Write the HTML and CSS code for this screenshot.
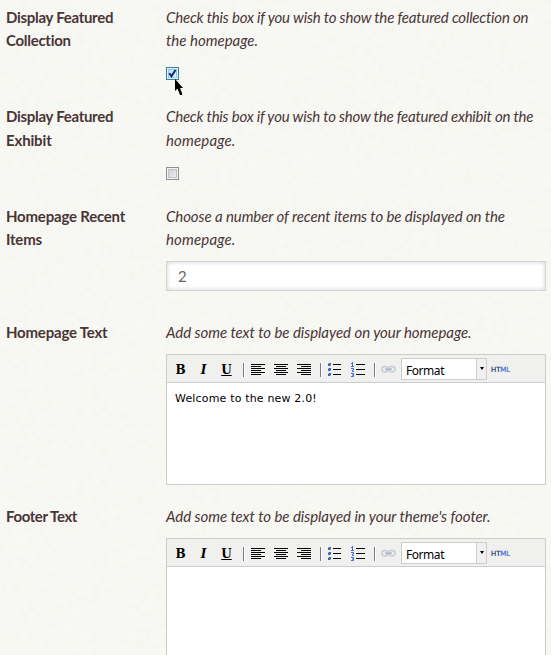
FILE: index.html
```
<!DOCTYPE html>
<html lang="en">
<head>
<meta charset="utf-8">
<title>Theme settings</title>
<link rel="stylesheet" href="styles.css">
</head>
<body>
<svg class="paper" width="551" height="655" aria-hidden="true">
  <filter id="grain" x="0" y="0" width="100%" height="100%">
    <feTurbulence type="fractalNoise" baseFrequency="0.14 0.18" numOctaves="3" seed="4"/>
    <feColorMatrix values="0 0 0 0 .86  0 0 0 0 .86  0 0 0 0 .8  .5 0 0 0 -.15"/>
  </filter>
  <rect width="551" height="655" filter="url(#grain)"/>
</svg>

<svg class="defs" width="0" height="0" aria-hidden="true">
  <symbol id="separator" viewBox="0 0 2 16"><path fill="#fff" d="M1 0h1v16H1z"/><path fill="#777b8c" d="M0 1h1v14H0z"/></symbol>
  <symbol id="left" viewBox="0 0 14 11"><path stroke="#000" d="M0 .5h14M0 2.5h10M0 4.5h14M0 6.5h10M0 8.5h14M0 10.5h10"/></symbol>
  <symbol id="center" viewBox="0 0 14 11"><path stroke="#000" d="M0 .5h14M2 2.5h10M0 4.5h14M2 6.5h10M0 8.5h14M2 10.5h10"/></symbol>
  <symbol id="right" viewBox="0 0 14 11"><path stroke="#000" d="M0 .5h14M4 2.5h10M0 4.5h14M4 6.5h10M0 8.5h14M4 10.5h10"/></symbol>
  <symbol id="bullets" viewBox="0 0 14 13"><path stroke="#000" d="M5 1.5h8M5 6.5h8M5 11.5h8"/><path fill="#3c66b4" d="M0 0h3v3H0zM0 5h3v3H0zM0 10h3v3H0z"/><path fill="#9db5df" d="M0 0h1v1H0zM0 5h1v1H0zM0 10h1v1H0zM2 2h1v1H2zM2 7h1v1H2zM2 12h1v1H2z"/></symbol>
  <symbol id="numbers" viewBox="0 0 14 15"><path stroke="#000" d="M5 2.5h9M5 7.5h9M5 12.500h9"/><path fill="none" stroke="#3f6dcb" d="M0 1.5h1.500M1.500 0v4M0 4.500h3M0 6.500h2.500v1.500h-1v1.500H3M0 11.500h2.500v3H0M1 13h2"/></symbol>
  <symbol id="link" viewBox="0 0 15 9"><g fill="none" stroke="#c3cbd7" stroke-width="1.7"><rect x="1" y="1.500" width="6" height="5.500" rx="2.500"/><rect x="8" y="1.500" width="6" height="5.500" rx="2.500"/><path stroke="#b0bbcb" d="M4 4.300h7"/></g></symbol>
</svg>

<form class="settings">
  <div class="field field-collection">
    <label class="name"><span class="n1">Display Featured</span><br><span class="n1">Collection</span></label>
    <div class="control">
      <p class="hint"><span class="h1">Check this box if you wish to show the featured collection on</span><br>the homepage.</p>
      <div class="check checked">
        <svg class="tick" width="9" height="9" viewBox="0 0 9 9"><path fill="none" stroke="#11216e" stroke-width="1.900" d="M1.300 4.300l2.200 3L7.500 1"/></svg>
        <svg class="pointer" width="11" height="18" viewBox="0 0 11 18"><path d="M1 0v12l2.500-2.500L6 16h2v-2l-2-5h3z"/></svg>
      </div>
    </div>
  </div>

  <div class="field field-exhibit">
    <label class="name"><span class="n1">Display Featured</span><br><span class="n3">Exhibit</span></label>
    <div class="control">
      <p class="hint"><span class="h3">Check this box if you wish to show the featured exhibit on the</span><br><span class="h4">homepage.</span></p>
      <div class="check"></div>
    </div>
  </div>

  <div class="field field-number">
    <label class="name" for="recent"><span class="n4">Homepage Recent</span><br><span class="n4">Items</span></label>
    <div class="control">
      <p class="hint"><span class="h5">Choose a number of recent items to be displayed on the</span><br><span class="h4">homepage.</span></p>
      <input class="number" id="recent" type="text" value="2">
    </div>
  </div>

  <div class="field field-editor">
    <label class="name"><span class="n4">Homepage Text</span></label>
    <div class="control">
      <p class="hint"><span class="h6">Add some text to be displayed on your homepage.</span></p>
      <div class="editor">
        <div class="toolbar">
          <b class="letter">B</b><b class="letter italic">I</b><b class="letter underline">U</b>
          <svg class="sep s1"><use href="#separator"/></svg>
          <svg class="align"><use href="#left"/></svg><svg class="align"><use href="#center"/></svg><svg class="align"><use href="#right"/></svg>
          <svg class="sep s2"><use href="#separator"/></svg>
          <svg class="bullets"><use href="#bullets"/></svg><svg class="numbers"><use href="#numbers"/></svg>
          <svg class="sep s3"><use href="#separator"/></svg>
          <svg class="link"><use href="#link"/></svg>
          <div class="format"><span class="format-name">Format</span><span class="drop"><i class="arrow"></i></span></div>
          <span class="html">HT<span class="lit">ML</span></span>
        </div>
        <div class="text">Welcome to the new 2.0!</div>
      </div>
    </div>
  </div>

  <div class="field">
    <label class="name"><span class="n7">Footer Text</span></label>
    <div class="control">
      <p class="hint"><span class="h6">Add some text to be displayed in your theme's footer.</span></p>
      <div class="editor editor-open">
        <div class="toolbar">
          <b class="letter">B</b><b class="letter italic">I</b><b class="letter underline">U</b>
          <svg class="sep s1"><use href="#separator"/></svg>
          <svg class="align"><use href="#left"/></svg><svg class="align"><use href="#center"/></svg><svg class="align"><use href="#right"/></svg>
          <svg class="sep s2"><use href="#separator"/></svg>
          <svg class="bullets"><use href="#bullets"/></svg><svg class="numbers"><use href="#numbers"/></svg>
          <svg class="sep s3"><use href="#separator"/></svg>
          <svg class="link"><use href="#link"/></svg>
          <div class="format"><span class="format-name">Format</span><span class="drop"><i class="arrow"></i></span></div>
          <span class="html">HT<span class="lit">ML</span></span>
        </div>
        <div class="text"></div>
      </div>
    </div>
  </div>
</form>
</body>
</html>
```
FILE: styles.css
```
* { box-sizing: border-box; }
body {
  margin: 0;
  height: 655px;
  overflow: hidden;
  background: #f8f8f4;
  color: #493536;
  font: 15px/23.4px Lato, "Open Sans", sans-serif;
}
.paper { position: absolute; inset: 0; z-index: -1; }
.defs { position: absolute; }
svg { display: block; flex: none; }

.settings { padding: 6px 5px 0 6px; }
.field { display: grid; grid-template-columns: 160px 380px; align-items: start; }
.field-collection { height: 98.400px; }
.field-exhibit { height: 100.600px; line-height: 24px; }
.field-exhibit .check { margin-top: 14.600px; }
.field-number { height: 116px; }
.field-editor { height: 184px; }
.name { font-weight: 700; white-space: nowrap; }
.hint { margin: 0; font-style: italic; white-space: nowrap; }

/* Tracking per line */
.n1 { letter-spacing: -.29px; }
.n3 { letter-spacing: -.15px; }
.n4 { letter-spacing: -.21px; }
.n7 { letter-spacing: -.4px; }
.h1 { letter-spacing: -.19px; }
.h3 { letter-spacing: -.21px; }
.h4 { letter-spacing: .15px; }
.h5 { letter-spacing: -.09px; }
.h6 { letter-spacing: -.05px; }

.check {
  position: relative;
  width: 13px;
  height: 13px;
  margin-top: 14px;
  border: 1px solid #8e8f8f;
  background: linear-gradient(135deg, #c3c8ce, #f6f6f6);
  box-shadow: inset 0 0 0 1px #f4f4f4, inset 0 0 0 2px #bfc3c8;
}
.checked {
  border-color: #427f9f;
  background: linear-gradient(135deg, #a9dcf6, #f0faff);
  box-shadow: inset 0 0 0 1px #def4fc, inset 0 0 0 2px #8bcdea;
}
.tick { position: absolute; left: 1px; top: 1px; }
.pointer { position: absolute; left: 7px; top: 11px; }

.number {
  display: block;
  width: 380px;
  height: 30px;
  margin-top: 9px;
  padding: 0 11px;
  border: 1px solid #d3d3d3;
  background: #fff;
  box-shadow: inset 0 0 5px #d4d4d4;
  color: #666;
  font: 15px Lato, sans-serif;
}

.editor { width: 380px; height: 131px; margin-top: 9.600px; border: 1px solid #ccc; background: #fff; }
.editor-open { height: 117px; border-bottom: 0; }
.toolbar {
  display: flex;
  align-items: center;
  height: 28px;
  padding: 3px 0 0 8px;
  border-bottom: 1px solid #ccc;
  background: #f0f0ee;
}
.letter { flex: none; width: 11px; margin-right: 12px; font: bold 12px/14px "DejaVu Serif", serif; color: #000; text-align: center; }
.italic { font-style: italic; }
.underline { text-decoration: underline; margin-right: 0; }
.sep { width: 2px; height: 16px; }
.s1 { margin: 0 6px 0 11px; }
.align { width: 14px; height: 11px; margin-right: 9px; }
.s2 { margin-right: 6px; }
.bullets { width: 14px; height: 13px; margin-right: 9px; }
.numbers { width: 14px; height: 15px; margin-right: 9px; }
.s3 { margin-right: 5px; }
.link { width: 15px; height: 9px; margin-right: 5px; }
.format {
  display: flex;
  justify-content: space-between;
  width: 86px;
  height: 22px;
  margin-top: -2px;
  border: 1px solid #ccc;
  background: #fff;
  color: #000;
}
.format-name { padding-left: 4px; font: 12px/23px "Noto Sans", sans-serif; letter-spacing: -.45px; }
.drop { display: flex; align-items: center; justify-content: center; width: 10px; border-left: 1px solid #ccc; background: #f0f0ee; }
.arrow { border: solid transparent; border-width: 3px 2.500px 0; border-top-color: #000; }
.html { margin-left: 4px; font: 7px/8px "DejaVu Sans", sans-serif; letter-spacing: -.1px; color: #1c3870; -webkit-text-stroke: .2px; }
.lit { color: #3b6fd0; }
.text { padding: 7px 8px; color: #000; font: 11px/17px "DejaVu Sans", sans-serif; letter-spacing: .17px; }
```
